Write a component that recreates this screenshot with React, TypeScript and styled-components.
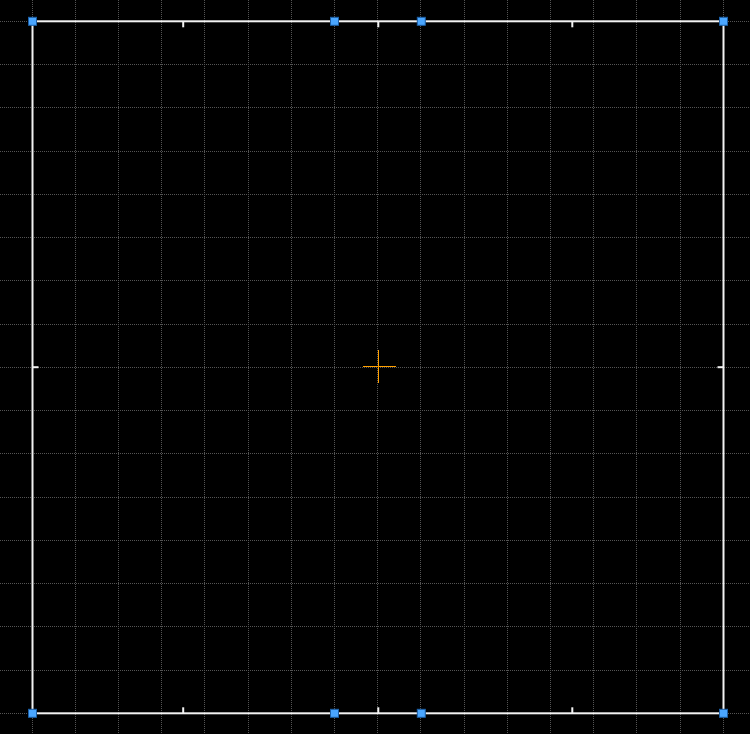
import React from "react";
import styled, { createGlobalStyle } from "styled-components";

const GlobalStyle = createGlobalStyle`
  html, body {
    margin: 0;
    padding: 0;
    background: #000;
    font-family: "Liberation Sans", Arial, sans-serif;
  }
`;

const Stage = styled.div`
  width: 750px;
  height: 734px;
  background: #000;
  overflow: hidden;
`;

const Canvas = styled.svg`
  display: block;
  width: 750px;
  height: 734px;
`;

const GridLine = styled.line`
  stroke: #555;
  stroke-width: 1;
  stroke-dasharray: 1 1;
  shape-rendering: crispEdges;
`;

const FrameRect = styled.rect`
  fill: none;
  stroke: #f2f2f2;
  stroke-width: 2;
`;

const Tick = styled.line`
  stroke: #f2f2f2;
  stroke-width: 2;
`;

const HandleBox = styled.rect`
  fill: #4aa6ff;
  stroke: #1c5fa6;
  stroke-width: 1;
`;

const CrossLine = styled.line`
  stroke: #ffa000;
  stroke-width: 1;
  shape-rendering: crispEdges;
`;

// canvas layout (pixels)
const left = 32.5;
const top = 21.3;
const right = 723.5;
const bottom = 713.3;
const cells = 16;
const stepX = 43.2;
const stepY = 43.25;

const gridXs = Array.from({ length: cells + 1 }, (_, k) => Math.floor(32 + k * stepX) + 0.5);
const gridYs = Array.from({ length: cells + 1 }, (_, k) => Math.floor(21 + k * stepY + 0.3) + 0.5);

const handleXs = [left, 334.5, 421.3, right];
const tickXs = [183.2, 378.3, 572.3];
const midY = 367.2;

const Handle = ({ x, y }: { x: number; y: number }) => (
  <HandleBox x={x - 4} y={y - 4} width={8} height={8} />
);

const Crosshair = ({ x, y }: { x: number; y: number }) => (
  <g>
    <CrossLine x1={x - 16} y1={y} x2={x + 17} y2={y} />
    <CrossLine x1={x} y1={y - 17} x2={x} y2={y + 16} />
  </g>
);

export default function App() {
  return (
    <>
      <GlobalStyle />
      <Stage>
        <Canvas viewBox="0 0 750 734">
          {gridXs.map((x) => (
            <GridLine key={"v" + x} x1={x} y1={0} x2={x} y2={734} />
          ))}
          {gridYs.map((y) => (
            <GridLine key={"h" + y} x1={0} y1={y} x2={750} y2={y} />
          ))}

          <FrameRect x={left} y={top} width={right - left} height={bottom - top} />

          {tickXs.map((x) => (
            <React.Fragment key={"t" + x}>
              <Tick x1={x} y1={top} x2={x} y2={top + 6} />
              <Tick x1={x} y1={bottom} x2={x} y2={bottom - 6} />
            </React.Fragment>
          ))}
          <Tick x1={left} y1={midY} x2={left + 6} y2={midY} />
          <Tick x1={right} y1={midY} x2={right - 6} y2={midY} />

          <Crosshair x={378.5} y={366.5} />

          {handleXs.map((x) => (
            <React.Fragment key={"h" + x}>
              <Handle x={x} y={top} />
              <Handle x={x} y={bottom} />
            </React.Fragment>
          ))}
        </Canvas>
      </Stage>
    </>
  );
}
